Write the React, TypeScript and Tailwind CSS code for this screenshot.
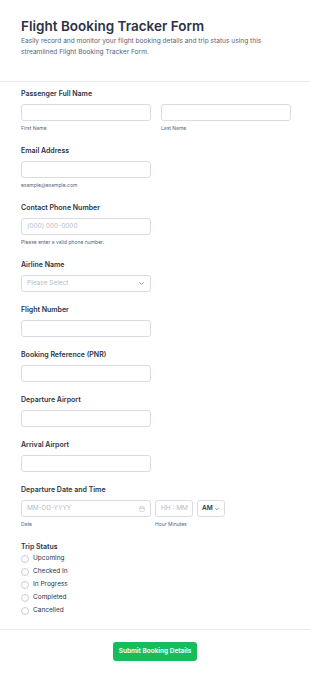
import { ChevronDown, Calendar } from 'lucide-react'

const font = { fontFamily: 'Inter, "Noto Sans", sans-serif' }

function Label({ children }: { children: React.ReactNode }) {
  return <div className="text-[7px] leading-[10px] font-semibold text-[#2c3345] mb-[5px]">{children}</div>
}

function Sub({ children }: { children: React.ReactNode }) {
  return <div className="text-[5px] leading-[9px] mt-[3px] text-[#57647e] whitespace-nowrap">{children}</div>
}

function Box({ placeholder, className = 'w-[130px]' }: { placeholder?: string; className?: string }) {
  return (
    <div className={`${className} h-[17px] border border-[#d9dce3] rounded-[3px] bg-white flex items-center px-[5px] text-[6.5px] text-[#b7bcc7] whitespace-nowrap`}>
      {placeholder}
    </div>
  )
}

const statuses = ['Upcoming', 'Checked In', 'In Progress', 'Completed', 'Cancelled']

export default function App() {
  return (
    <div className="w-[310px] min-h-[677px] bg-white" style={font}>
      {/* Header */}
      <div className="px-[21px] pt-[17px] pb-[23px] border-b border-[#eaebf0]">
        <h1 className="text-[13.5px] leading-[18px] font-semibold text-[#2c3345]">Flight Booking Tracker Form</h1>
        <p className="text-[6.6px] leading-[11px] text-[#57647e] mt-[1px]">
          Easily record and monitor your flight booking details and trip status using this streamlined Flight Booking Tracker Form.
        </p>
      </div>

      {/* Fields */}
      <div className="px-[21px] pt-[7px] pb-[12px] border-b border-[#eaebf0] flex flex-col gap-[13px]">
        <div>
          <Label>Passenger Full Name</Label>
          <div className="flex gap-[10px]">
            <div>
              <Box />
              <Sub>First Name</Sub>
            </div>
            <div>
              <Box />
              <Sub>Last Name</Sub>
            </div>
          </div>
        </div>

        <div>
          <Label>Email Address</Label>
          <Box />
          <Sub>example@example.com</Sub>
        </div>

        <div>
          <Label>Contact Phone Number</Label>
          <Box placeholder="(000) 000-0000" />
          <Sub>Please enter a valid phone number.</Sub>
        </div>

        <div>
          <Label>Airline Name</Label>
          <div className="w-[130px] h-[17px] border border-[#d9dce3] rounded-[3px] flex items-center justify-between px-[5px] text-[6.5px] text-[#b7bcc7]">
            <span>Please Select</span>
            <ChevronDown size={7} strokeWidth={2.5} className="text-[#57647e]" />
          </div>
        </div>

        <div>
          <Label>Flight Number</Label>
          <Box />
        </div>

        <div>
          <Label>Booking Reference (PNR)</Label>
          <Box />
        </div>

        <div>
          <Label>Departure Airport</Label>
          <Box />
        </div>

        <div>
          <Label>Arrival Airport</Label>
          <Box />
        </div>

        <div>
          <Label>Departure Date and Time</Label>
          <div className="flex gap-[4px]">
            <div>
              <div className="w-[130px] h-[17px] border border-[#d9dce3] rounded-[3px] flex items-center justify-between px-[5px] text-[6.5px] text-[#b7bcc7]">
                <span>MM-DD-YYYY</span>
                <Calendar size={6} className="text-[#b7bcc7]" />
              </div>
              <Sub>Date</Sub>
            </div>
            <div>
              <Box placeholder="HH : MM" className="w-[38px]" />
              <Sub>Hour Minutes</Sub>
            </div>
            <div className="w-[28px] h-[17px] border border-[#d9dce3] rounded-[3px] flex items-center justify-between px-[4px] text-[6.5px] font-semibold text-[#2c3345]">
              <span>AM</span>
              <ChevronDown size={6} strokeWidth={2.5} className="text-[#57647e]" />
            </div>
          </div>
        </div>

        <div>
          <div className="text-[7px] leading-[10px] font-semibold text-[#2c3345]">Trip Status</div>
          <div className="flex flex-col">
            {statuses.map((s) => (
              <div key={s} className="flex items-center gap-[4px] h-[13px]">
                <span className="w-[8px] h-[8px] rounded-full border border-[#c9cdd6] bg-white" />
                <span className="text-[6.5px] text-[#2c3345]">{s}</span>
              </div>
            ))}
          </div>
        </div>
      </div>

      {/* Submit */}
      <div className="flex justify-center pt-[12px] pb-[17px]">
        <button className="h-[19px] px-[6px] rounded-[3px] bg-[#18bd5b] text-white text-[6.5px] font-semibold">
          Submit Booking Details
        </button>
      </div>
    </div>
  )
}
